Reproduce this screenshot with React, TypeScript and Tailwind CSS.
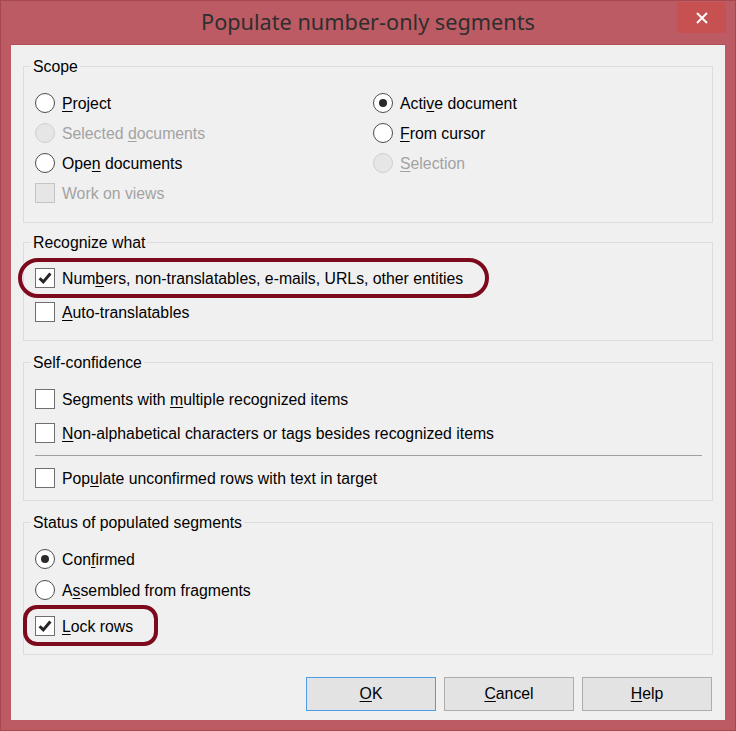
import React from 'react';

// * Small pieces
const U = ({ children }: { children: React.ReactNode }) => (
  <span className="underline underline-offset-2">{children}</span>
);

function Radio({ checked, disabled }: { checked?: boolean; disabled?: boolean }) {
  return (
    <span
      className={`flex h-[20px] w-[20px] shrink-0 items-center justify-center rounded-full border ${
        disabled ? 'border-[#cfcfcf] bg-[#e6e6e6]' : 'border-[#4d4d4d] bg-white'
      }`}
    >
      {checked && <span className="h-[8px] w-[8px] rounded-full bg-[#2a2a2a]" />}
    </span>
  );
}

function Check({ checked, disabled }: { checked?: boolean; disabled?: boolean }) {
  return (
    <span
      className={`flex h-[20px] w-[20px] shrink-0 items-center justify-center border ${
        disabled ? 'border-[#c4c4c4] bg-[#e6e6e6]' : 'border-[#6f6f6f] bg-white'
      }`}
    >
      {checked && (
        <svg width="14" height="14" viewBox="0 0 14 14">
          <path d="M1.6 7.2 L5.3 10.9 L12.4 2.6" fill="none" stroke="#262626" strokeWidth="3" />
        </svg>
      )}
    </span>
  );
}

function Row({
  control,
  label,
  disabled,
  className = '',
  children,
}: {
  control: React.ReactNode;
  label: React.ReactNode;
  disabled?: boolean;
  className?: string;
  children?: React.ReactNode;
}) {
  return (
    <div className={`relative flex h-[30px] items-center gap-[7px] ${className}`}>
      {control}
      <span className={`pt-[2px] ${disabled ? 'text-[#a3a3a3]' : 'text-black'}`}>{label}</span>
      {children}
    </div>
  );
}

function Group({
  title,
  className = '',
  children,
}: {
  title: string;
  className?: string;
  children: React.ReactNode;
}) {
  return (
    <div className={`relative border border-[#dcdcdc] pl-[11px] pr-[10px] ${className}`}>
      <span className="absolute -top-[10px] left-[7px] bg-[#f0f0f0] px-[2px] pt-px leading-[18px] text-black">
        {title}
      </span>
      {children}
    </div>
  );
}

// * Highlight marker drawn over a row
const Marker = ({ className }: { className: string }) => (
  <span className={`pointer-events-none absolute border-[4px] border-[#7d0a1c] ${className}`} />
);

const Button = ({ children, primary }: { children: React.ReactNode; primary?: boolean }) => (
  <button
    type="button"
    className={`h-[34px] w-[130px] border bg-[#e3e3e3] text-black ${
      primary ? 'border-[#4d9de6]' : 'border-[#adadad]'
    }`}
  >
    {children}
  </button>
);

export default function App() {
  return (
    <div className="flex h-[731px] w-[736px] flex-col border border-[#a7474f] bg-[#bd5b64] font-['Liberation_Sans',Arial,sans-serif] text-[15.8px]">
      {/* Title bar */}
      <div className="relative flex h-[43px] shrink-0 items-center justify-center">
        <span className="pb-[1px] font-['Noto_Sans',sans-serif] text-[21.7px] text-[#2e2e2e]">
          Populate number-only segments
        </span>
        <span className="absolute right-[9px] top-[1px] flex h-[31px] w-[49px] items-center justify-center bg-[#c75050]">
          <svg width="14" height="14" viewBox="0 0 14 14">
            <path d="M2 2 L12 12 M12 2 L2 12" stroke="white" strokeWidth="2" />
          </svg>
        </span>
      </div>

      {/* Content */}
      <div className="mx-[10px] mb-[10px] flex flex-1 flex-col border-t border-[#b04f58] bg-[#f0f0f0] px-[12px] pt-[21px]">
        <Group title="Scope" className="h-[157px] pt-[21px]">
          <div className="grid grid-cols-[338px_1fr]">
            <div className="flex flex-col">
              <Row control={<Radio />} label={<><U>P</U>roject</>} />
              <Row control={<Radio disabled />} disabled label={<>Selected <U>d</U>ocuments</>} />
              <Row control={<Radio />} label={<>Ope<U>n</U> documents</>} />
              <Row control={<Check disabled />} disabled className="h-[28px]" label="Work on views" />
            </div>
            <div className="flex flex-col">
              <Row control={<Radio checked />} label={<>Acti<U>v</U>e document</>} />
              <Row control={<Radio />} label={<><U>F</U>rom cursor</>} />
              <Row control={<Radio disabled />} disabled label={<><U>S</U>election</>} />
            </div>
          </div>
        </Group>

        <Group title="Recognize what" className="mt-[19px] h-[99px] pt-[20px]">
          <div className="flex flex-col gap-[4px]">
            <Row
              control={<Check checked />}
              label={<>Num<U>b</U>ers, non-translatables, e-mails, URLs, other entities</>}
            >
              <Marker className="-left-[17px] -top-[5px] h-[40px] w-[471px] rounded-[20px]" />
            </Row>
            <Row control={<Check />} label={<><U>A</U>uto-translatables</>} />
          </div>
        </Group>

        <Group title="Self-confidence" className="mt-[21px] h-[139px] pt-[21px]">
          <div className="flex flex-col">
            <Row control={<Check />} label={<>Segments with <U>m</U>ultiple recognized items</>} />
            <Row
              control={<Check />}
              className="mt-[4px]"
              label={<><U>N</U>on-alphabetical characters or tags besides recognized items</>}
            />
            <div className="mt-[7px] h-px bg-[#a0a0a0]" />
            <Row
              control={<Check />}
              className="mt-[7px]"
              label={<>Pop<U>u</U>late unconfirmed rows with text in target</>}
            />
          </div>
        </Group>

        <Group title="Status of populated segments" className="mt-[21px] h-[133px] pt-[21px]">
          <div className="flex flex-col">
            <Row control={<Radio checked />} label={<>Con<U>f</U>irmed</>} />
            <Row control={<Radio />} className="mt-[1px]" label={<>A<U>s</U>sembled from fragments</>} />
            <Row control={<Check checked />} className="mt-[6px]" label={<><U>L</U>ock rows</>}>
              <Marker className="-left-[12px] -top-[6px] h-[41px] w-[135px] rounded-[14px]" />
            </Row>
          </div>
        </Group>

        {/* Buttons */}
        <div className="mr-px mt-[22px] flex justify-end gap-[8px]">
          <Button primary>
            <U>O</U>K
          </Button>
          <Button>
            <U>C</U>ancel
          </Button>
          <Button>
            <U>H</U>elp
          </Button>
        </div>
      </div>
    </div>
  );
}
